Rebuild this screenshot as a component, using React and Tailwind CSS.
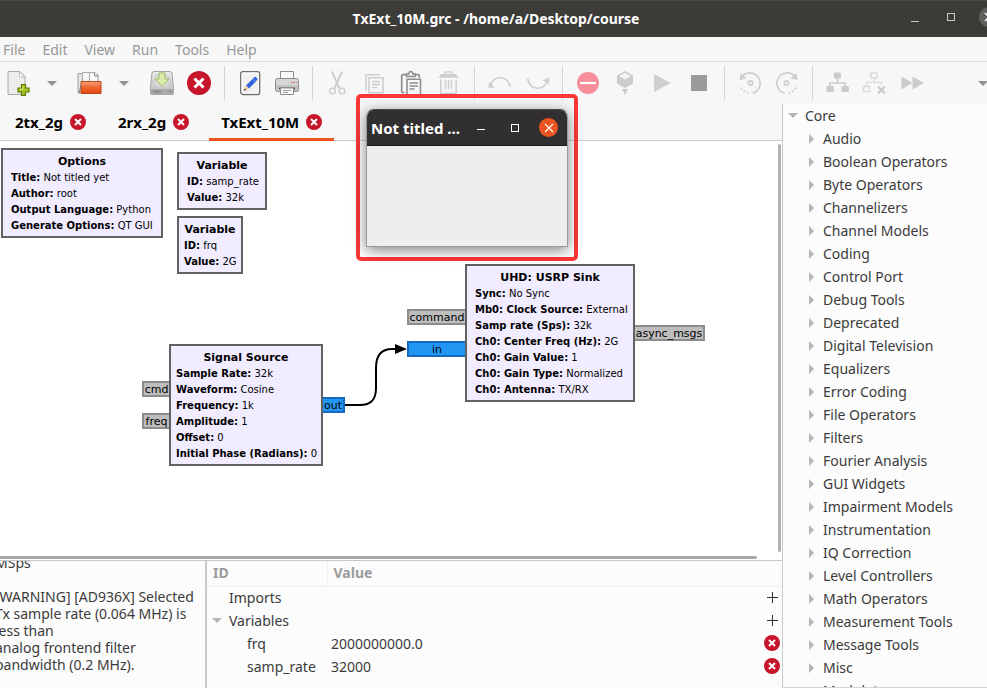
import React from "react";

const UI_FONT = "font-['Noto_Sans','Open_Sans',sans-serif]";

function Icon({ children, label }) {
  return (
    <svg
      viewBox="0 0 24 24"
      className="h-6 w-6 shrink-0 overflow-visible"
      fill="none"
      role="img"
      aria-label={label}
    >
      {children}
    </svg>
  );
}

function CloseBadge({ className }) {
  return (
    <svg viewBox="0 0 24 24" className={className} fill="none" aria-hidden="true">
      <circle cx="12" cy="12" r="12" fill="#c7162b" />
      <path d="M7.500 7.500l9 9M16.500 7.500l-9 9" stroke="#fff" strokeWidth="3" />
    </svg>
  );
}

function Caret({ className = "" }) {
  return (
    <svg viewBox="0 0 10 5" className={`h-[5px] w-[10px] ${className}`} aria-hidden="true">
      <path d="M0 0h10L5 5z" fill="currentColor" />
    </svg>
  );
}

function Tool({ label, children }) {
  return (
    <button
      type="button"
      aria-label={label}
      className="flex h-full w-[37px] shrink-0 items-center justify-center"
    >
      {children}
    </button>
  );
}

function ToolCaret({ label }) {
  return (
    <button
      type="button"
      aria-label={label}
      className="flex h-full w-[35px] shrink-0 items-center justify-center pr-1 text-[#929292]"
    >
      <Caret />
    </button>
  );
}

function Separator() {
  return (
    <div className="flex w-[14px] shrink-0 justify-center">
      <div className="h-[34px] w-px bg-[#d6d6d6]" />
    </div>
  );
}

const NewIcon = () => (
  <Icon label="New">
    <path d="M2 .5h12l5 5v18H2z" fill="#ececeb" stroke="#aaa" />
    <path d="M13.5 1v5h5z" fill="#fff" stroke="#b4b4b4" strokeWidth=".8" />
    <path
      d="M15.5 13.5h4v3.5h3.500v4h-3.500v3.500h-4v-3.500H12v-4h3.500z"
      fill="#a5c420"
      stroke="#5b7a06"
      strokeWidth="1.2"
    />
    <path d="M16.800 15.500v2.800h-3" stroke="#d5e87d" />
  </Icon>
);

const OpenIcon = () => (
  <Icon label="Open">
    <defs>
      <linearGradient id="folder" x1="0" y1="0" x2="0" y2="1">
        <stop offset="0" stopColor="#f7a27a" />
        <stop offset=".45" stopColor="#ee6a35" />
        <stop offset="1" stopColor="#e6440b" />
      </linearGradient>
    </defs>
    <path d="M0 2.500h5l1 1h14v18H0z" fill="#e4e4e4" stroke="#a0a0a0" />
    <path d="M4.500 1.500h9l3 3v8h-12z" fill="#f5f5f5" stroke="#aaa" />
    <path d="M11.500 1.500h5.500l3 3v8h-8.500z" fill="#fafafa" stroke="#aaa" />
    <path d="M16.500 1.500v3.500H20" stroke="#888" />
    <path d="M3 10.500h20v12H3z" fill="url(#folder)" stroke="#b8441c" />
    <path d="M1 22.500l2-8" stroke="#777" />
  </Icon>
);

const SaveIcon = () => (
  <Icon label="Save">
    <defs>
      <linearGradient id="disk" x1="0" y1="0" x2="0" y2="1">
        <stop offset="0" stopColor="#e9e9e9" />
        <stop offset="1" stopColor="#bdbdbd" />
      </linearGradient>
    </defs>
    <path d="M4 .5h16q1.500 0 2 1.500l1.500 15v5q0 1.500-1.500 1.500H2Q.5 23.500.5 22v-5L2 2Q2.500.5 4 .5z" fill="url(#disk)" stroke="#a6a6a6" />
    <ellipse cx="12" cy="10" rx="8.500" ry="7" fill="#dadada" stroke="#c8c8c8" />
    <path d="M1 18h22v4.500q0 .7-1 .7H2q-1 0-1-.7z" fill="#a9a9a9" />
    <path d="M3 20.500h8M19 20.500h2" stroke="#858585" strokeWidth="1.500" />
    <path d="M9 2h6v6h4l-7 7.500L5 8h4z" fill="#d9ecae" stroke="#9dbb62" />
  </Icon>
);

const EditIcon = () => (
  <Icon label="Edit properties">
    <rect x="2.700" y=".7" width="19" height="22.800" rx="2" fill="#f0f0f0" stroke="#6f6f6f" strokeWidth="1.300" />
    <rect x="4.200" y="2.200" width="16" height="19.800" rx="1" stroke="#fff" />
    <path d="M8 14.500l8.500-8.500q.6-.5 1.200 0l1.600 1.600q.5.600 0 1.200L11 17.500z" fill="#2f62dc" />
    <path d="M14.300 8l3.300 3" stroke="#87a6f0" />
    <path d="M8 14.500l3 3-5 2z" fill="#f3c9a0" />
    <path d="M6.800 17.600l1.500 1.300-2.600.8z" fill="#333" />
  </Icon>
);

const PrintIcon = () => (
  <Icon label="Print">
    <path d="M5.500 8V.5h13V8" fill="#f7f7f7" stroke="#8e8e8e" />
    <rect x=".5" y="7.500" width="23" height="13" rx="2" fill="#c4c4c4" stroke="#8a8a8a" />
    <path d="M1 9.500q0-1.500 1.500-1.500h19q1.500 0 1.500 1.500V14H1z" fill="#d6d6d6" />
    <path d="M16 11.500h1.500M18.500 11.500H20M21 11.500h1" stroke="#e2574c" strokeWidth="1.200" />
    <path d="M4 17.500h16" stroke="#555" strokeWidth="2" />
    <path d="M5.500 17v6.500h13V17z" fill="#fafafa" stroke="#8e8e8e" />
    <path d="M8 19.500h8M8 21.500h5" stroke="#9c9c9c" />
  </Icon>
);

const CutIcon = () => (
  <Icon label="Cut">
    <path d="M6 .5l7.500 17M16 .5L8.500 17.500" stroke="#cfcfcf" strokeWidth="2" />
    <circle cx="6.500" cy="20" r="2.800" stroke="#cfcfcf" strokeWidth="1.600" />
    <circle cx="16" cy="20" r="2.800" stroke="#cfcfcf" strokeWidth="1.600" />
  </Icon>
);

const CopyIcon = () => (
  <Icon label="Copy">
    <path d="M3 19.500V3.700h14" stroke="#cfcfcf" strokeWidth="1.500" />
    <path d="M6 6.700h14v15H6z" fill="#f7f7f7" stroke="#cfcfcf" strokeWidth="1.600" />
    <path d="M9 10.500h8M9 13.500h8M9 16.500h5" stroke="#cfcfcf" strokeWidth="1.400" />
  </Icon>
);

const PasteIcon = () => (
  <Icon label="Paste">
    <path d="M4.500 21.500H3q-1.300 0-1.300-1.500V5Q1.700 3.700 3 3.700h15q1.300 0 1.300 1.300v2" stroke="#8f8f8f" strokeWidth="1.700" />
    <path d="M6.500 5.500V3h2.300q.2-2.500 2-2.500t2 2.500H15v2.500z" fill="#f7f7f7" stroke="#8f8f8f" strokeWidth="1.600" />
    <path d="M7 8.200h13.500v15.500H7z" fill="#f7f7f7" stroke="#8f8f8f" strokeWidth="1.600" />
    <path d="M9.500 12h8.500M9.500 15h8.500M9.500 18h5" stroke="#8f8f8f" strokeWidth="1.500" />
  </Icon>
);

const DeleteIcon = () => (
  <Icon label="Delete">
    <path d="M1.500 6.800L4 3h15l2.500 3.800z" fill="#cfcfcf" />
    <path d="M7.500 3.500L8.500 1h6l1 2.500" stroke="#cfcfcf" strokeWidth="1.500" />
    <path d="M3.800 8.500v14h15.400V8.500" stroke="#cfcfcf" strokeWidth="1.600" />
    <path d="M8.500 9v9M11.500 9v9M14.500 9v9" stroke="#cfcfcf" strokeWidth="1.500" />
  </Icon>
);

const UndoIcon = () => (
  <Icon label="Undo">
    <path d="M2.500 14C6 4.500 19 3.500 22.500 16" stroke="#cfcfcf" strokeWidth="1.700" />
    <path d="M1 10.500l-.5 6.500 6.500-.5z" fill="#cfcfcf" />
  </Icon>
);

const RedoIcon = () => (
  <Icon label="Redo">
    <path d="M2.500 7.500C5 19.500 18 20.500 22.500 10" stroke="#cfcfcf" strokeWidth="1.700" />
    <path d="M24 6.500l.3 6.500-6.600-3.500z" fill="#cfcfcf" />
  </Icon>
);

const ErrorsIcon = () => (
  <Icon label="Errors">
    <circle cx="12" cy="12" r="11" fill="#f78f9b" />
    <path d="M4 12h16" stroke="#fff" strokeWidth="2.200" />
  </Icon>
);

const GenerateIcon = () => (
  <Icon label="Generate">
    <path d="M12 0l8 4.500v8L12 17l-8-4.500v-8z" fill="#cbcbcb" />
    <path d="M12 1.800l6 3.300-6 3.400-6-3.400z" fill="#f3f3f3" />
    <path d="M9 18h6l-3 6z" fill="#cbcbcb" />
  </Icon>
);

const PlayIcon = () => (
  <Icon label="Execute">
    <path d="M4 3l17 9-17 9z" fill="#cfcfcf" />
  </Icon>
);

const StopIcon = () => (
  <Icon label="Stop">
    <path d="M4 4h16v16H4z" fill="#9a9a9a" />
  </Icon>
);

const RotateShape = () => (
  <>
    <path d="M4.500 5A10.300 10.300 0 1 1 14.500 22.200" stroke="#cfcfcf" strokeWidth="1.700" />
    <path d="M3 16.500q3 5 9 6" stroke="#cfcfcf" strokeWidth="1.600" strokeDasharray="2 2" />
    <path d="M2.500 2L1.500 9l7-1.500z" fill="#cfcfcf" />
    <circle cx="12.500" cy="12" r="2.200" stroke="#cfcfcf" strokeWidth="1.700" />
  </>
);

const RotateLeftIcon = () => (
  <Icon label="Rotate counterclockwise">
    <RotateShape />
  </Icon>
);

const RotateRightIcon = () => (
  <Icon label="Rotate clockwise">
    <g transform="matrix(-1 0 0 1 24 0)">
      <RotateShape />
    </g>
  </Icon>
);

const HierIcon = () => (
  <Icon label="Create hier block">
    <path d="M11.500 6v6M4 15v-3h15v3" stroke="#cbcbcb" strokeWidth="1.600" />
    <rect x="8" y="1.500" width="7" height="6" rx="1" fill="#cbcbcb" />
    <rect x=".3" y="15" width="7.500" height="6" rx="1" fill="#cbcbcb" />
    <rect x="15.300" y="15" width="7.500" height="6" rx="1" fill="#cbcbcb" />
  </Icon>
);

const HierOffIcon = () => (
  <Icon label="Open hier">
    <path d="M11 7v4.500M3.500 15v-3.500h15v2" stroke="#dedede" strokeWidth="1.600" />
    <rect x="8" y="2" width="6" height="5" stroke="#dadada" strokeWidth="1.500" />
    <rect x=".5" y="15.500" width="6" height="5" stroke="#dadada" strokeWidth="1.500" />
    <path d="M15 15.500l7 7M22 15.500l-7 7" stroke="#c6c6c6" strokeWidth="2" />
  </Icon>
);

const ForwardIcon = () => (
  <Icon label="Toggle source">
    <path d="M1.500 5.500l11 6.500-11 6.500z" fill="#cbcbcb" />
    <path d="M12.500 5.500l11.500 6.500-11.500 6.500z" fill="#cbcbcb" />
  </Icon>
);

function TitleBar() {
  return (
    <header className="flex h-[37px] shrink-0 items-center overflow-hidden border-t border-[#4a4946] bg-[#3d3b38] text-white">
      <h1 className="min-w-0 flex-1 truncate pl-[85px] text-center text-sm font-bold">
        TxExt_10M.grc - /home/a/Desktop/course
      </h1>
      <div className="-mr-3 flex shrink-0 items-center gap-5 text-[#c9c8c6]">
        <button type="button" aria-label="Minimize" className="flex h-5 w-4 items-center justify-center">
          <span className="mt-1 h-px w-2 bg-[#c9c8c6]" />
        </button>
        <button type="button" aria-label="Maximize" className="-mt-1 flex h-5 w-4 items-center justify-center">
          <span className="h-2 w-2 shrink-0 border border-[#c9c8c6]" />
        </button>
        <button type="button" aria-label="Close" className="-mt-1 flex h-5 w-5 items-center justify-center rounded-full bg-[#62605e]">
          <svg viewBox="0 0 10 10" className="h-[10px] w-[10px]" aria-hidden="true">
            <path d="M1 1l8 8M9 1L1 9" stroke="#fff" strokeWidth="1.500" />
          </svg>
        </button>
      </div>
    </header>
  );
}

function MenuBar() {
  return (
    <nav className="flex h-[25px] shrink-0 items-center gap-[17px] border-b border-[#dadada] pt-[2px] pl-[3px] text-sm text-[#979797]">
      {["File", "Edit", "View", "Run", "Tools", "Help"].map((m) => (
        <button type="button" key={m}>
          {m}
        </button>
      ))}
    </nav>
  );
}

function Toolbar() {
  return (
    <div className="-ml-px flex h-[42px] shrink-0 items-center overflow-hidden">
      <Tool label="New"><NewIcon /></Tool>
      <ToolCaret label="New options" />
      <Tool label="Open"><OpenIcon /></Tool>
      <ToolCaret label="Recent files" />
      <Tool label="Save"><SaveIcon /></Tool>
      <Tool label="Close file"><CloseBadge className="h-6 w-6" /></Tool>
      <Separator />
      <Tool label="Edit properties"><EditIcon /></Tool>
      <Tool label="Print"><PrintIcon /></Tool>
      <Separator />
      <Tool label="Cut"><CutIcon /></Tool>
      <Tool label="Copy"><CopyIcon /></Tool>
      <Tool label="Paste"><PasteIcon /></Tool>
      <Tool label="Delete"><DeleteIcon /></Tool>
      <Separator />
      <Tool label="Undo"><UndoIcon /></Tool>
      <Tool label="Redo"><RedoIcon /></Tool>
      <Separator />
      <Tool label="Errors"><ErrorsIcon /></Tool>
      <Tool label="Generate"><GenerateIcon /></Tool>
      <Tool label="Execute"><PlayIcon /></Tool>
      <Tool label="Stop"><StopIcon /></Tool>
      <Separator />
      <Tool label="Rotate counterclockwise"><RotateLeftIcon /></Tool>
      <Tool label="Rotate clockwise"><RotateRightIcon /></Tool>
      <Separator />
      <Tool label="Create hier"><HierIcon /></Tool>
      <Tool label="Open hier"><HierOffIcon /></Tool>
      <Tool label="Toggle source"><ForwardIcon /></Tool>
      <button type="button" aria-label="More tools" className="-mr-px ml-auto text-[#929292]">
        <Caret />
      </button>
    </div>
  );
}

function Tab({ name, active }) {
  return (
    <div
      className={`flex items-center gap-[7px] border-b-[3px] px-3 pt-px ${
        active ? "border-[#e95420]" : "border-transparent"
      }`}
    >
      <button type="button" role="tab" aria-selected={!!active} className="text-[15px] leading-5 font-bold text-black">
        {name}
      </button>
      <button type="button" aria-label={`Close ${name}`}>
        <CloseBadge className="h-4 w-4" />
      </button>
    </div>
  );
}

function Tabs() {
  return (
    <div role="tablist" className="flex h-[37px] shrink-0 gap-2 bg-[#f7f7f7] pl-[3px] shadow-[inset_0_-1px_0_#cdcdcd]">
      <Tab name="2tx_2g" />
      <Tab name="2rx_2g" />
      <Tab name="TxExt_10M" active />
    </div>
  );
}

function Block({ title, params, className }) {
  return (
    <section className={`absolute border-2 border-[#616161] bg-[#f1ecff] pt-1 pb-[2px] whitespace-nowrap text-black ${className}`}>
      <h2 className="text-center text-[11px] leading-4 font-bold">{title}</h2>
      {params.map(([k, v]) => (
        <p key={k} className="text-[10px] leading-4">
          <b>{k}:</b> {v}
        </p>
      ))}
    </section>
  );
}

function Port({ name, stream, className }) {
  return (
    <div
      className={`absolute h-4 border-2 text-center text-[11px] leading-[14px] text-black ${
        stream ? "border-[#1769bd] bg-[#2196f3]" : "border-[#8c8c8c] bg-[#bdbdbd]"
      } ${className}`}
    >
      {name}
    </div>
  );
}

function Canvas() {
  return (
    <div className="relative min-h-0 flex-1 overflow-hidden bg-white font-['DejaVu_Sans',sans-serif]">
      <Port name="cmd" className="top-[240px] left-[142px] w-[29px]" />
      <Port name="freq" className="top-[272px] left-[142px] w-[29px]" />
      <Port name="out" stream className="top-[256px] left-[321px] w-6" />
      <Port name="command" className="top-[168px] left-[407px] w-[60px]" />
      <Port name="in" stream className="top-[200px] left-[407px] w-[60px]" />
      <Port name="async_msgs" className="top-[184px] left-[633px] w-[72px]" />
      <Block
        title="Options"
        className="top-[7px] left-px w-[162px] px-2"
        params={[
          ["Title", "Not titled yet"],
          ["Author", "root"],
          ["Output Language", "Python"],
          ["Generate Options", "QT GUI"],
        ]}
      />
      <Block
        title="Variable"
        className="top-[11px] left-[177px] w-[90px] px-2"
        params={[["ID", "samp_rate"], ["Value", "32k"]]}
      />
      <Block
        title="Variable"
        className="top-[75px] left-[177px] w-[66px] px-[5px]"
        params={[["ID", "frq"], ["Value", "2G"]]}
      />
      <Block
        title="Signal Source"
        className="top-[203px] left-[169px] w-[154px] px-[5px]"
        params={[
          ["Sample Rate", "32k"],
          ["Waveform", "Cosine"],
          ["Frequency", "1k"],
          ["Amplitude", "1"],
          ["Offset", "0"],
          ["Initial Phase (Radians)", "0"],
        ]}
      />
      <Block
        title="UHD: USRP Sink"
        className="top-[123px] left-[465px] w-[170px] px-2"
        params={[
          ["Sync", "No Sync"],
          ["Mb0: Clock Source", "External"],
          ["Samp rate (Sps)", "32k"],
          ["Ch0: Center Freq (Hz)", "2G"],
          ["Ch0: Gain Value", "1"],
          ["Ch0: Gain Type", "Normalized"],
          ["Ch0: Antenna", "TX/RX"],
        ]}
      />
      <svg viewBox="0 0 62 72" className="absolute top-[200px] left-[345px] h-[72px] w-[62px]" fill="none" aria-hidden="true">
        <path d="M0 64h15C26 64 31 59 31 47V27C31 14 36 8 47 8h4" stroke="#000" strokeWidth="2" />
        <path d="M50 3l12 5-12 5z" fill="#000" />
      </svg>
      <div className="absolute top-[3px] right-px bottom-2 w-[3px] rounded-full bg-[#b2b2b2]" />
      <div className="absolute bottom-px left-0 h-[3px] w-[757px] max-w-[97%] rounded-r-full bg-[#a8a8a8]" />
    </div>
  );
}

function Console() {
  return (
    <div className="w-[205px] shrink-0 overflow-hidden text-sm leading-[17px]">
      <div className="-mt-[7px] -ml-[5px] whitespace-pre text-[#3b3b3b]">
        <p>MSps</p>
        <p>{" "}</p>
        <p>[WARNING] [AD936X] Selected</p>
        <p>Tx sample rate (0.064 MHz) is</p>
        <p>less than</p>
        <p>analog frontend filter</p>
        <p>bandwidth (0.2 MHz).</p>
      </div>
    </div>
  );
}

function AddButton({ label }) {
  return (
    <button type="button" aria-label={label} className="block">
      <svg viewBox="0 0 16 16" className="h-4 w-4" aria-hidden="true">
        <path d="M8.500 2v11M3 7.500h11" stroke="#2e2e2e" strokeWidth="1" />
      </svg>
    </button>
  );
}

function RemoveButton({ label }) {
  return (
    <button type="button" aria-label={label} className="block">
      <CloseBadge className="h-4 w-4" />
    </button>
  );
}

function VariableTable() {
  return (
    <div className="min-w-0 flex-1 overflow-hidden border-l-2 border-[#c9c9c9]">
      <table className="w-full table-fixed border-collapse text-left text-sm text-[#3b3b3b]">
        <thead>
          <tr className="h-[25px] border-b border-[#efefef] text-[#9b9b9b]">
            <th className="w-[120px] border-r border-[#efefef] p-0 pl-[6px]">ID</th>
            <th className="p-0 pl-[6px]">Value</th>
            <th className="w-[18px] p-0"><span className="sr-only">Action</span></th>
          </tr>
        </thead>
        <tbody>
          <tr className="h-[23px]">
            <td className="p-0 pl-[22px]">Imports</td>
            <td className="p-0" />
            <td className="p-0"><AddButton label="Add import" /></td>
          </tr>
          <tr className="h-[23px]">
            <td className="p-0 pl-[5px]">
              <div className="flex items-center gap-[7px]">
                <Caret className="text-[#b5b5b5]" />
                Variables
              </div>
            </td>
            <td className="p-0" />
            <td className="p-0"><AddButton label="Add variable" /></td>
          </tr>
          <tr className="h-[23px]">
            <td className="p-0 pl-10">frq</td>
            <td className="p-0 pl-1">2000000000.0</td>
            <td className="p-0 pb-px"><RemoveButton label="Remove frq" /></td>
          </tr>
          <tr className="h-[23px]">
            <td className="p-0 pl-10">samp_rate</td>
            <td className="p-0 pl-1">32000</td>
            <td className="p-0 pb-px"><RemoveButton label="Remove samp_rate" /></td>
          </tr>
        </tbody>
      </table>
    </div>
  );
}

const CATEGORIES = [
  "Audio",
  "Boolean Operators",
  "Byte Operators",
  "Channelizers",
  "Channel Models",
  "Coding",
  "Control Port",
  "Debug Tools",
  "Deprecated",
  "Digital Television",
  "Equalizers",
  "Error Coding",
  "File Operators",
  "Filters",
  "Fourier Analysis",
  "GUI Widgets",
  "Impairment Models",
  "Instrumentation",
  "IQ Correction",
  "Level Controllers",
  "Math Operators",
  "Measurement Tools",
  "Message Tools",
  "Misc",
  "Modulators",
];

function BlockTree() {
  return (
    <aside className="w-[205px] shrink-0 overflow-hidden border-b border-l border-b-[#d5d5d5] border-l-[#c9c9c9] bg-[#fcfcfc] text-sm leading-[23px] text-[#3b3b3b]">
      <button type="button" className="flex items-center gap-[7px] pl-[5px]">
        <Caret className="text-[#b5b5b5]" />
        Core
      </button>
      <ul className="pl-[26px]">
        {CATEGORIES.map((c) => (
          <li key={c}>
            <button type="button" className="flex items-center gap-[9px]">
              <svg viewBox="0 0 5 10" className="h-[10px] w-[5px]" aria-hidden="true">
                <path d="M0 0l5 5-5 5z" fill="#b5b5b5" />
              </svg>
              {c}
            </button>
          </li>
        ))}
      </ul>
    </aside>
  );
}

function PopupWindow() {
  return (
    <div className="absolute top-[94px] left-[356px] h-[167px] w-[222px] rounded-[5px] border-4 border-[#fb3838] px-[6px] pt-[11px] pb-[10px]">
      <div
        role="dialog"
        aria-label="Not titled yet"
        className="flex h-full flex-col overflow-hidden rounded-t-lg border border-[#9a9a9a] border-t-[#4a4848] bg-[#eeeeee] shadow-[0_3px_14px_rgba(0,0,0,0.5)]"
      >
        <div className="flex h-9 shrink-0 items-center border-b border-[#1d1b1b] bg-[#322f30] pr-[9px] pl-1 text-white">
          <h2 className="flex-1 text-[15px] leading-5 font-bold whitespace-nowrap">Not titled ...</h2>
          <button type="button" aria-label="Minimize" className="flex h-5 w-5 items-center justify-center">
            <span className="mt-1 h-px w-2 bg-white" />
          </button>
          <button type="button" aria-label="Maximize" className="ml-[14px] flex h-5 w-5 items-center justify-center">
            <span className="h-2 w-2 border border-white" />
          </button>
          <button type="button" aria-label="Close" className="ml-[14px] flex h-[19px] w-[19px] items-center justify-center rounded-full bg-[#e95420]">
            <svg viewBox="0 0 10 10" className="h-[10px] w-[10px]" aria-hidden="true">
              <path d="M1 1l8 8M9 1L1 9" stroke="#fff" strokeWidth="1.200" />
            </svg>
          </button>
        </div>
      </div>
    </div>
  );
}

export default function App() {
  return (
    <div className={`relative flex h-screen flex-col overflow-hidden bg-[#f7f7f7] ${UI_FONT}`}>
      <TitleBar />
      <MenuBar />
      <Toolbar />
      <div className="flex min-h-0 flex-1">
        <main className="flex min-w-0 flex-1 flex-col">
          <Tabs />
          <Canvas />
          <div className="flex h-32 shrink-0 border-t border-[#c9c9c9] bg-[#fcfcfc]">
            <Console />
            <VariableTable />
          </div>
        </main>
        <BlockTree />
      </div>
      <PopupWindow />
    </div>
  );
}
